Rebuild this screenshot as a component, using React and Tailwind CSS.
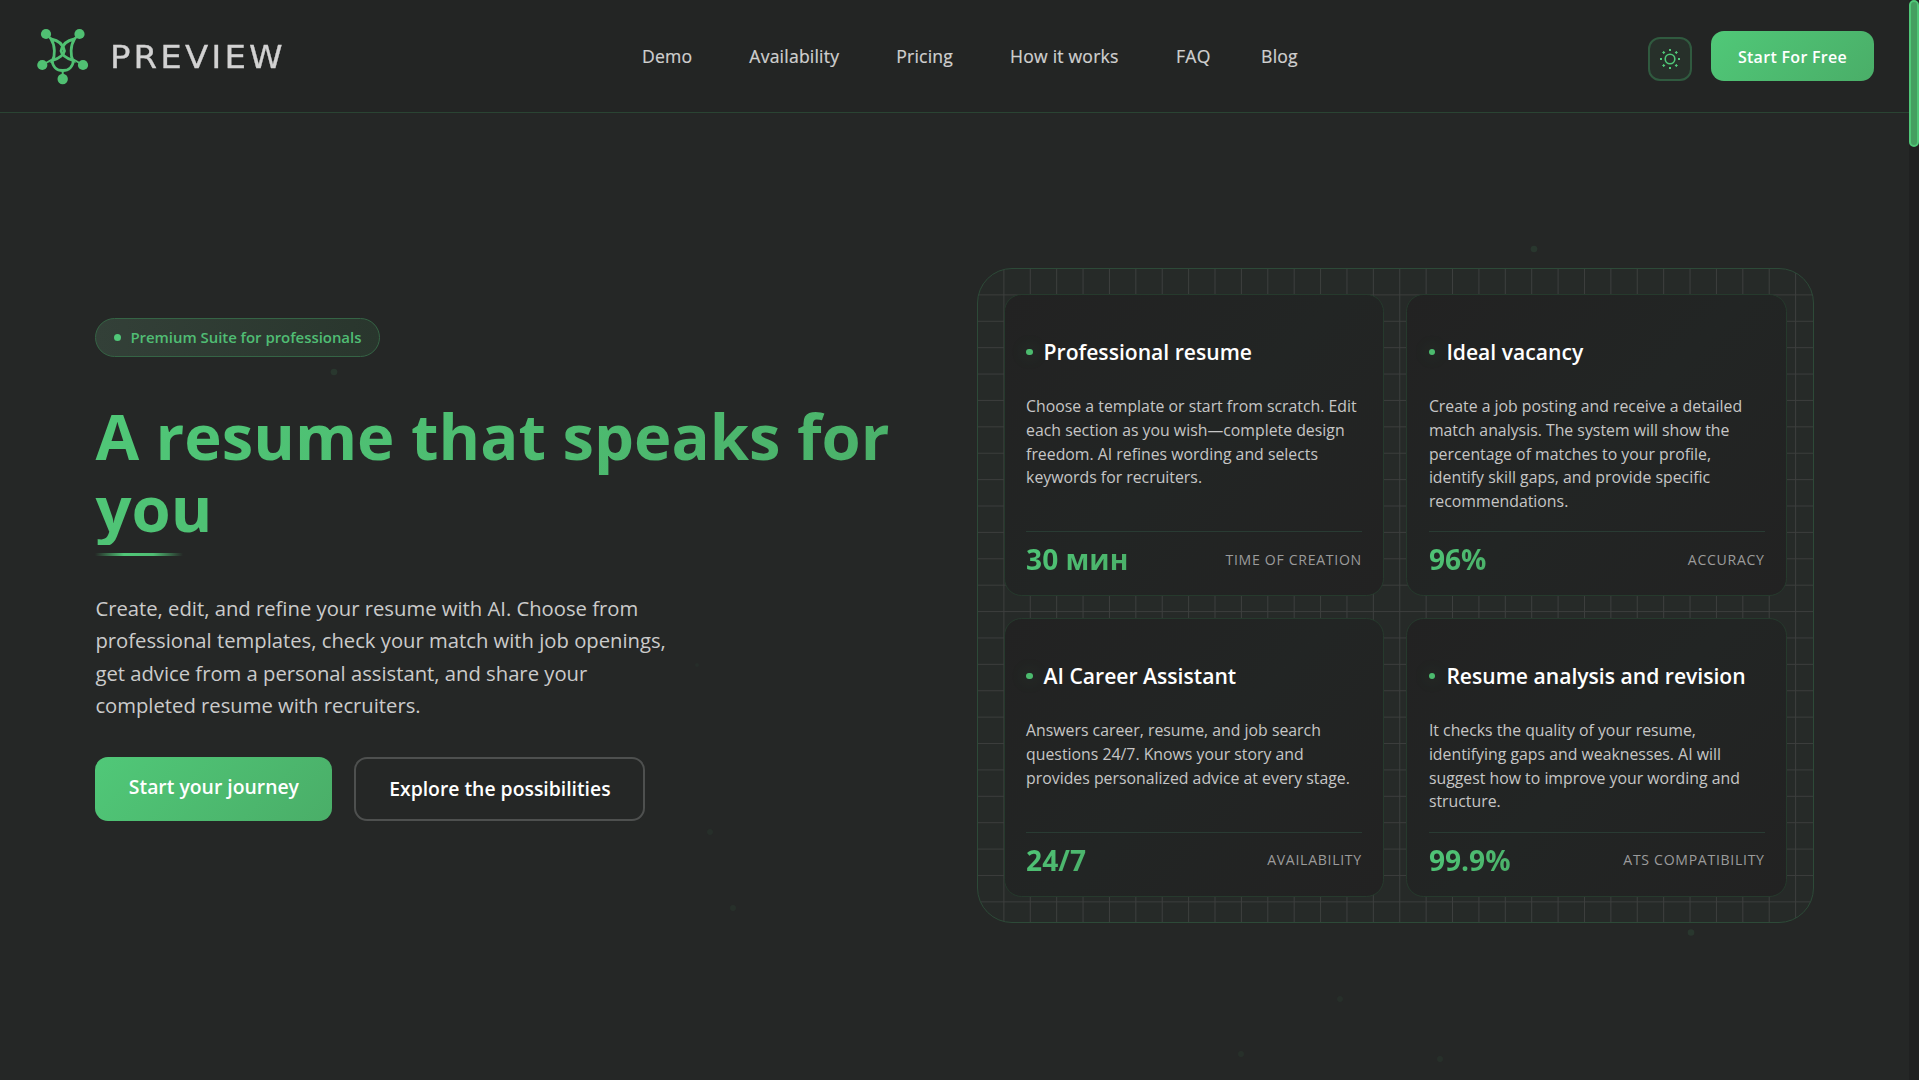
import React from 'react';

const navItems = [
  { text: 'Demo', className: 'ml-[0px]' },
  { text: 'Availability', className: 'ml-[57px]' },
  { text: 'Pricing', className: 'ml-[57px]' },
  { text: 'How it works', className: 'ml-[57px]' },
  { text: 'FAQ', className: 'ml-[57.500px]' },
  { text: 'Blog', className: 'ml-[50.500px]' },
];

const features = [
  {
    title: 'Professional resume',
    text: 'Choose a template or start from scratch. Edit each section as you wish—complete design freedom. AI refines wording and selects keywords for recruiters.',
    value: '30 мин',
    label: 'Time of creation',
  },
  {
    title: 'Ideal vacancy',
    text: 'Create a job posting and receive a detailed match analysis. The system will show the percentage of matches to your profile, identify skill gaps, and provide specific recommendations.',
    value: '96%',
    label: 'Accuracy',
  },
  {
    title: 'AI Career Assistant',
    text: 'Answers career, resume, and job search questions 24/7. Knows your story and provides personalized advice at every stage.',
    value: '24/7',
    label: 'Availability',
  },
  {
    title: 'Resume analysis and revision',
    text: 'It checks the quality of your resume, identifying gaps and weaknesses. AI will suggest how to improve your wording and structure.',
    value: '99.9%',
    label: 'ATS compatibility',
  },
];

// Floating particles behind the hero
const particles = [
  { x: 334, y: 372, r: 3.3, o: 0.1 },
  { x: 1534, y: 249, r: 3.3, o: 0.1 },
  { x: 1691, y: 932.5, r: 3.3, o: 0.1 },
  { x: 710, y: 832, r: 3, o: 0.05 },
  { x: 733, y: 908, r: 3, o: 0.06 },
  { x: 697, y: 665, r: 2, o: 0.04 },
  { x: 1340, y: 999, r: 3, o: 0.05 },
  { x: 1241, y: 1054, r: 3, o: 0.06 },
  { x: 1440, y: 1059, r: 3, o: 0.06 },
];

function Logo() {
  return (
    <svg width="52" height="57" viewBox="0 0 52 57" fill="none" stroke="#50c072" strokeWidth="2.8">
      <path d="M9 6 L15.500 12 M42.500 6 L36 12 M5.500 37 L15 31.500 M46 37 L36.500 31.500 M25.700 43 V50" strokeWidth="2" />
      <path d="M14 11 C22 12.500 26.500 17.500 27.500 23 C26.500 28 21.500 30.500 15.500 32.500 C18 28 18.500 18 14 11Z" />
      <path d="M37.500 11 C29.500 12.500 25 17.500 24 23 C25 28 30 30.500 36 32.500 C33.500 28 33 18 37.500 11Z" />
      <path d="M15 32 C15.500 38.500 19.500 42.500 25.700 42.500 C32 42.500 36 38.500 36.500 32" />
      <g fill="#50c072" stroke="none">
        <circle cx="9" cy="6" r="5.100" />
        <circle cx="42.500" cy="6" r="5.100" />
        <circle cx="5.300" cy="37" r="5.100" />
        <circle cx="46" cy="37" r="5.100" />
        <circle cx="25.700" cy="51" r="5.200" />
      </g>
    </svg>
  );
}

function SunIcon() {
  return (
    <svg width="22" height="22" viewBox="0 0 22 22" fill="none" stroke="#50c878" strokeWidth="1.6">
      <circle cx="11" cy="11" r="4.800" />
      <path d="M11 1 v2 M11 19 v2 M1 11 h2 M19 11 h2" strokeWidth="2" />
      <path d="M3.300 4.500 h2.800 M4.700 3.100 v2.800 M15.900 4.500 h2.800 M17.300 3.100 v2.800 M3.300 17.500 h2.800 M4.700 16.100 v2.800 M15.900 17.500 h2.800 M17.300 16.100 v2.800" strokeWidth="1.1" />
    </svg>
  );
}

function Header() {
  return (
    <header className="h-[113px] shrink-0 flex items-center bg-[#232524] border-b border-[#2a4433] pl-[37px] pr-[35px]">
      <div className="flex items-center w-[605px]">
        <Logo />
        <span className="mt-[3px] ml-[20.500px] origin-left scale-x-[1.080] font-['DejaVu_Sans'] text-[31.500px] leading-none tracking-[2.870px] text-[#d2d2d2] [-webkit-text-stroke:0.3px_#d2d2d2]">PREVIEW</span>
      </div>
      <nav className="flex items-center text-[17.600px] tracking-[0.200px] font-medium text-[#d0d0d0] [-webkit-text-stroke:0.2px_#d0d0d0] whitespace-nowrap">
        {navItems.map(item => (
          <a key={item.text} href="#" className={item.className}>{item.text}</a>
        ))}
      </nav>
      <div className="ml-auto flex items-center">
        <button className="w-[44px] h-[44px] mt-[5px] mr-[19px] flex items-center justify-center rounded-[12px] border-2 border-[#305a3f] bg-[#27302a]">
          <SunIcon />
        </button>
        <button className="w-[163px] h-[50px] pt-px rounded-[13px] bg-linear-135 from-[#50c878] to-[#4aae68] text-[16px] tracking-[0.300px] font-semibold text-white">
          Start For Free
        </button>
      </div>
    </header>
  );
}

function FeatureCard({ item }) {
  return (
    <article className="flex flex-col rounded-[17.600px] border border-[#263a2d] bg-linear-135 from-[#222222] via-[#222524] to-[#222222] px-[21.500px] pt-[41px] pb-[16px]">
      <h3 className="flex items-center gap-[11px] text-[21.120px] leading-[31px] font-semibold text-white whitespace-nowrap">
        <span className="w-[6.500px] h-[6.500px] shrink-0 rounded-full bg-[#4cbb6e] shadow-[0_0_17px_rgba(80,200,120,0.3)]" />
        {item.title}
      </h3>
      <p className="mt-[27.600px] text-[15.840px] leading-[23.760px] text-[#c6c6c6]">{item.text}</p>
      <div className="mt-auto flex items-center justify-between border-t border-[#293b33] pt-[7px]">
        <span className="text-[28.160px] leading-[40px] font-bold bg-linear-135 from-[#50c878] to-[#4aae68] bg-clip-text text-transparent">{item.value}</span>
        <span className="text-[14.080px] tracking-[0.700px] uppercase text-[#9b9b9b]">{item.label}</span>
      </div>
    </article>
  );
}

function Hero() {
  return (
    <main className="flex-1 flex pl-[95.400px]">
      <section className="w-[882px] pt-[205px]">
        <div className="flex w-[285px] items-center h-[39px] pl-[18px] rounded-full border border-[#356445] bg-linear-to-r from-[#334038] to-[#29362d]">
          <span className="w-[7px] h-[7px] mr-[9px] rounded-full bg-[#50c878]" />
          <span className="text-[14.960px] tracking-[-0.030px] font-semibold text-[#50bd74] whitespace-nowrap">Premium Suite for professionals</span>
        </div>
        <h1 className="mt-[43px] pb-[1px] w-[830px] text-[63.360px] leading-[72px] font-bold bg-linear-135 from-[#50c878] to-[#4aae68] bg-clip-text text-transparent">
          A resume that speaks for you
        </h1>
        <div className="mt-[8px] w-[88px] h-[3px] bg-[linear-gradient(to_right,transparent,#50c878_33%,#4fbd73_66%,transparent)]" />
        <p className="mt-[36px] w-[590px] text-[20.240px] leading-[32.400px] text-[#cbcbcb]">
          Create, edit, and refine your resume with AI. Choose from professional templates, check your match with job openings, get advice from a personal assistant, and share your completed resume with recruiters.
        </p>
        <div className="mt-[35px] flex gap-[22px]">
          <button className="w-[237px] h-[64px] pb-[4px] rounded-[13px] bg-linear-135 from-[#50c878] to-[#4aae68] text-[19.360px] font-semibold text-white">
            Start your journey
          </button>
          <button className="w-[291px] h-[64px] rounded-[13px] border-2 border-[#4e504f] text-[19.360px] font-semibold text-white">
            Explore the possibilities
          </button>
        </div>
      </section>
      <section className="mt-[155px] w-[836.600px] h-[655px] rounded-[35px] border border-[#2d4a38] overflow-hidden bg-[#262a28] bg-[linear-gradient(to_right,#3d3f3e_1px,transparent_1px),linear-gradient(to_bottom,#3b3d3c_1px,transparent_1px)] bg-size-[26.400px_26.400px] bg-position-[-1px_-1px] pl-[25.200px] pr-[25.800px] pt-[25.400px]">
        <div className="grid grid-cols-2 grid-rows-[302px_278.500px] gap-[22px]">
          {features.map(item => (
            <FeatureCard key={item.title} item={item} />
          ))}
        </div>
      </section>
    </main>
  );
}

export default function App() {
  return (
    <div className="relative w-full h-[1080px] flex overflow-hidden bg-[#252726] font-['Open_Sans',sans-serif]">
      <svg className="absolute inset-0" width="1909" height="1080">
        {particles.map(p => (
          <circle key={p.x} cx={p.x} cy={p.y} r={p.r} fill="#50c878" opacity={p.o} />
        ))}
      </svg>
      <div className="relative flex-1 flex flex-col">
        <Header />
        <Hero />
      </div>
      <div className="relative w-[10px] h-full shrink-0 bg-[#202121]">
        <div className="h-[147px] rounded-[5px] border-2 border-[#50c878] bg-[#459f61]" />
      </div>
    </div>
  );
}
